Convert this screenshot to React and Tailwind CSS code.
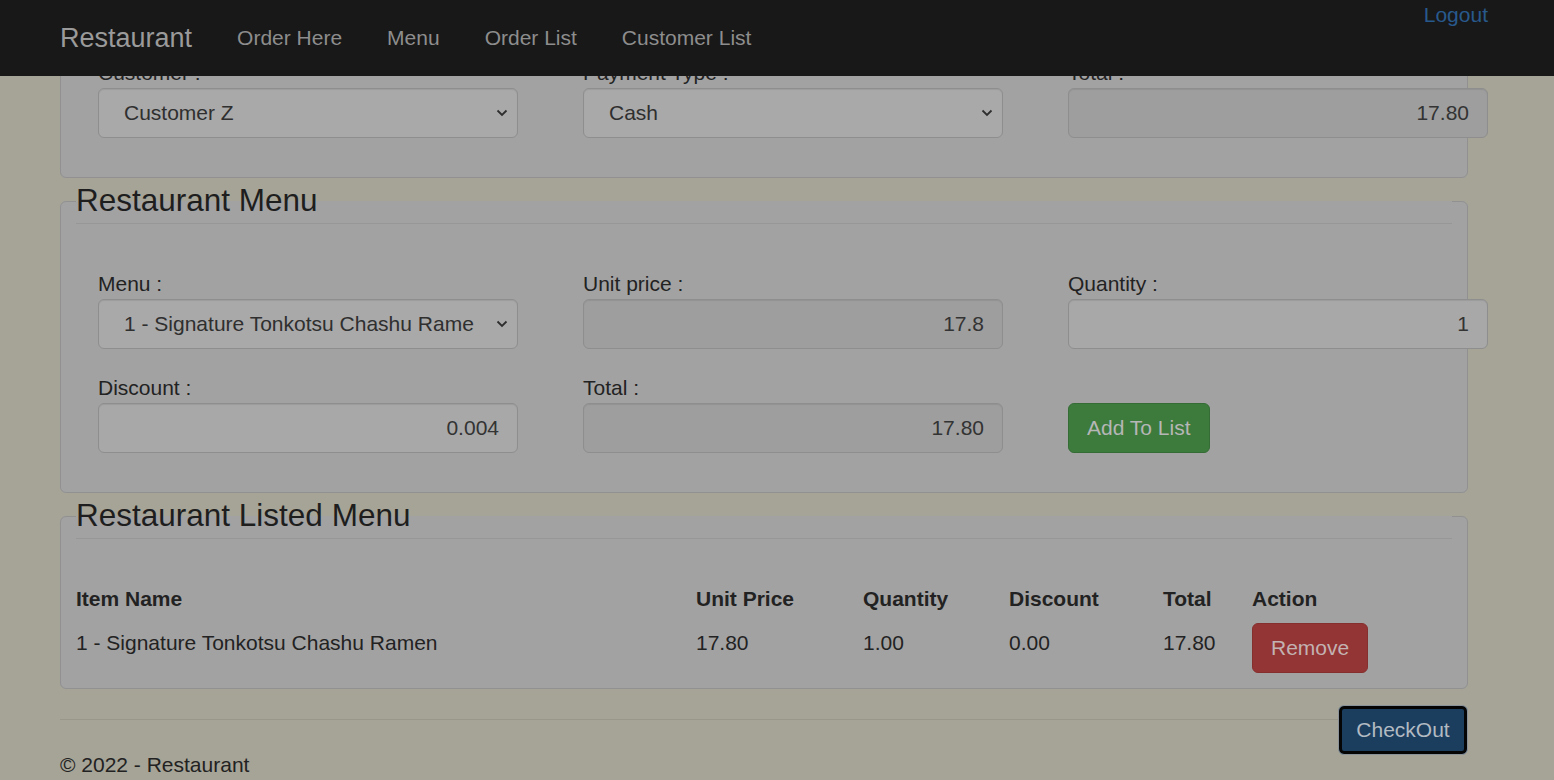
import React from "react";

function Chevron() {
  return (
    <svg width="12" height="8" viewBox="0 0 12 8" className="shrink-0">
      <path d="M1.5 1.5 L6 6 L10.5 1.5" fill="none" stroke="#2e2e2e" strokeWidth="1.8" />
    </svg>
  );
}

function FakeSelect({ value }) {
  return (
    <div className="flex items-center w-[420px] h-[50px] border border-[#8e8e8e] rounded-[6px] bg-[#a9a9a9] shadow-[inset_0_1px_1px_rgba(0,0,0,0.075)] pl-[25px] pr-[9px] text-[#2f2f2f]">
      <span className="w-[350px] overflow-hidden whitespace-nowrap">{value}</span>
      <span className="ml-auto">
        <Chevron />
      </span>
    </div>
  );
}

function Field({ value, readOnly }) {
  return (
    <input
      readOnly
      defaultValue={value}
      className={
        "block w-[420px] h-[50px] border border-[#8e8e8e] rounded-[6px] px-[18px] text-right text-[#333] shadow-[inset_0_1px_1px_rgba(0,0,0,0.075)] outline-none " +
        (readOnly ? "bg-[#9e9e9e]" : "bg-[#a8a8a8]")
      }
    />
  );
}

function Group({ label, children }) {
  return (
    <div className="px-[22px]">
      <label className="block leading-[30px] text-[#222]">{label}</label>
      {children}
    </div>
  );
}

function Panel({ title, children }) {
  return (
    <fieldset className="block min-w-0 w-full border border-[#919191] rounded-[6px] bg-[#a2a2a2] px-[15px] pb-[15px]">
      <legend className="w-full text-[31.5px] leading-[45px] text-[#1e1e1e] border-b border-[#979797]">
        {title}
      </legend>
      {children}
    </fieldset>
  );
}

export default function App() {
  const nav = ["Order Here", "Menu", "Order List", "Customer List"];

  return (
    <div className="relative h-screen overflow-hidden bg-[#a6a496] font-['Liberation_Sans',Arial,sans-serif] text-[21px] leading-[30px] text-[#222]">
      <div className="fixed top-0 inset-x-0 z-10 h-[76px] bg-[#181818] flex pl-[60px] pr-[66px]">
        <div className="flex items-center gap-[45px] h-[76px]">
          <span className="text-[27px] text-[#9a9a9a]">Restaurant</span>
          {nav.map((n) => (
            <a key={n} className="text-[#8d8d8d]">
              {n}
            </a>
          ))}
        </div>
        <a className="ml-auto self-start text-[#28598c]">Logout</a>
      </div>

      <div className="ml-[60px] w-[1408px] mt-[-33px]">
        <Panel title="Order Details">
          <div className="grid grid-cols-[485px_485px_485px] mt-[45px] pb-[24px]">
            <Group label="Customer :">
              <FakeSelect value="Customer Z" />
            </Group>
            <Group label="Payment Type :">
              <FakeSelect value="Cash" />
            </Group>
            <Group label="Total :">
              <Field value="17.80" readOnly />
            </Group>
          </div>
        </Panel>

        <Panel title="Restaurant Menu">
          <div className="grid grid-cols-[485px_485px_485px] gap-y-[24px] mt-[45px] pb-[24px]">
            <Group label="Menu :">
              <FakeSelect value="1 - Signature Tonkotsu Chashu Ramen" />
            </Group>
            <Group label="Unit price :">
              <Field value="17.8" readOnly />
            </Group>
            <Group label="Quantity :">
              <Field value="1" />
            </Group>
            <Group label="Discount :">
              <Field value="0.004" />
            </Group>
            <Group label="Total :">
              <Field value="17.80" readOnly />
            </Group>
            <div className="px-[22px] pt-[30px]">
              <button className="h-[50px] px-[18px] border border-[#356c35] rounded-[6px] bg-[#3d7b3d] text-[#b6b6b6]">
                Add To List
              </button>
            </div>
          </div>
        </Panel>

        <Panel title="Restaurant Listed Menu">
          <table className="w-full mt-[45px] border-collapse">
            <thead>
              <tr className="text-left">
                <th className="w-[620px] p-0 font-bold">Item Name</th>
                <th className="w-[167px] p-0 font-bold">Unit Price</th>
                <th className="w-[146px] p-0 font-bold">Quantity</th>
                <th className="w-[154px] p-0 font-bold">Discount</th>
                <th className="w-[89px] p-0 font-bold">Total</th>
                <th className="p-0 font-bold">Action</th>
              </tr>
            </thead>
            <tbody>
              <tr className="align-top">
                <td className="pt-[14px]">1 - Signature Tonkotsu Chashu Ramen</td>
                <td className="pt-[14px]">17.80</td>
                <td className="pt-[14px]">1.00</td>
                <td className="pt-[14px]">0.00</td>
                <td className="pt-[14px]">17.80</td>
                <td className="pt-[9px]">
                  <button className="h-[50px] px-[18px] border border-[#862f2f] rounded-[6px] bg-[#943535] text-[#c2b2b2]">
                    Remove
                  </button>
                </td>
              </tr>
            </tbody>
          </table>
        </Panel>

        <div className="float-right mt-[16px]">
          <button className="w-[130px] h-[50px] border border-[#8a929a] rounded-[6px] bg-[#1b3d5e] text-[#b2bac2] shadow-[inset_0_0_0_3px_#050505]">
            CheckOut
          </button>
        </div>
        <hr className="mt-[30px] border-0 border-t border-[#999789]" />
        <footer className="pt-[30px]">
          <p>© 2022 - Restaurant</p>
        </footer>
      </div>
    </div>
  );
}
